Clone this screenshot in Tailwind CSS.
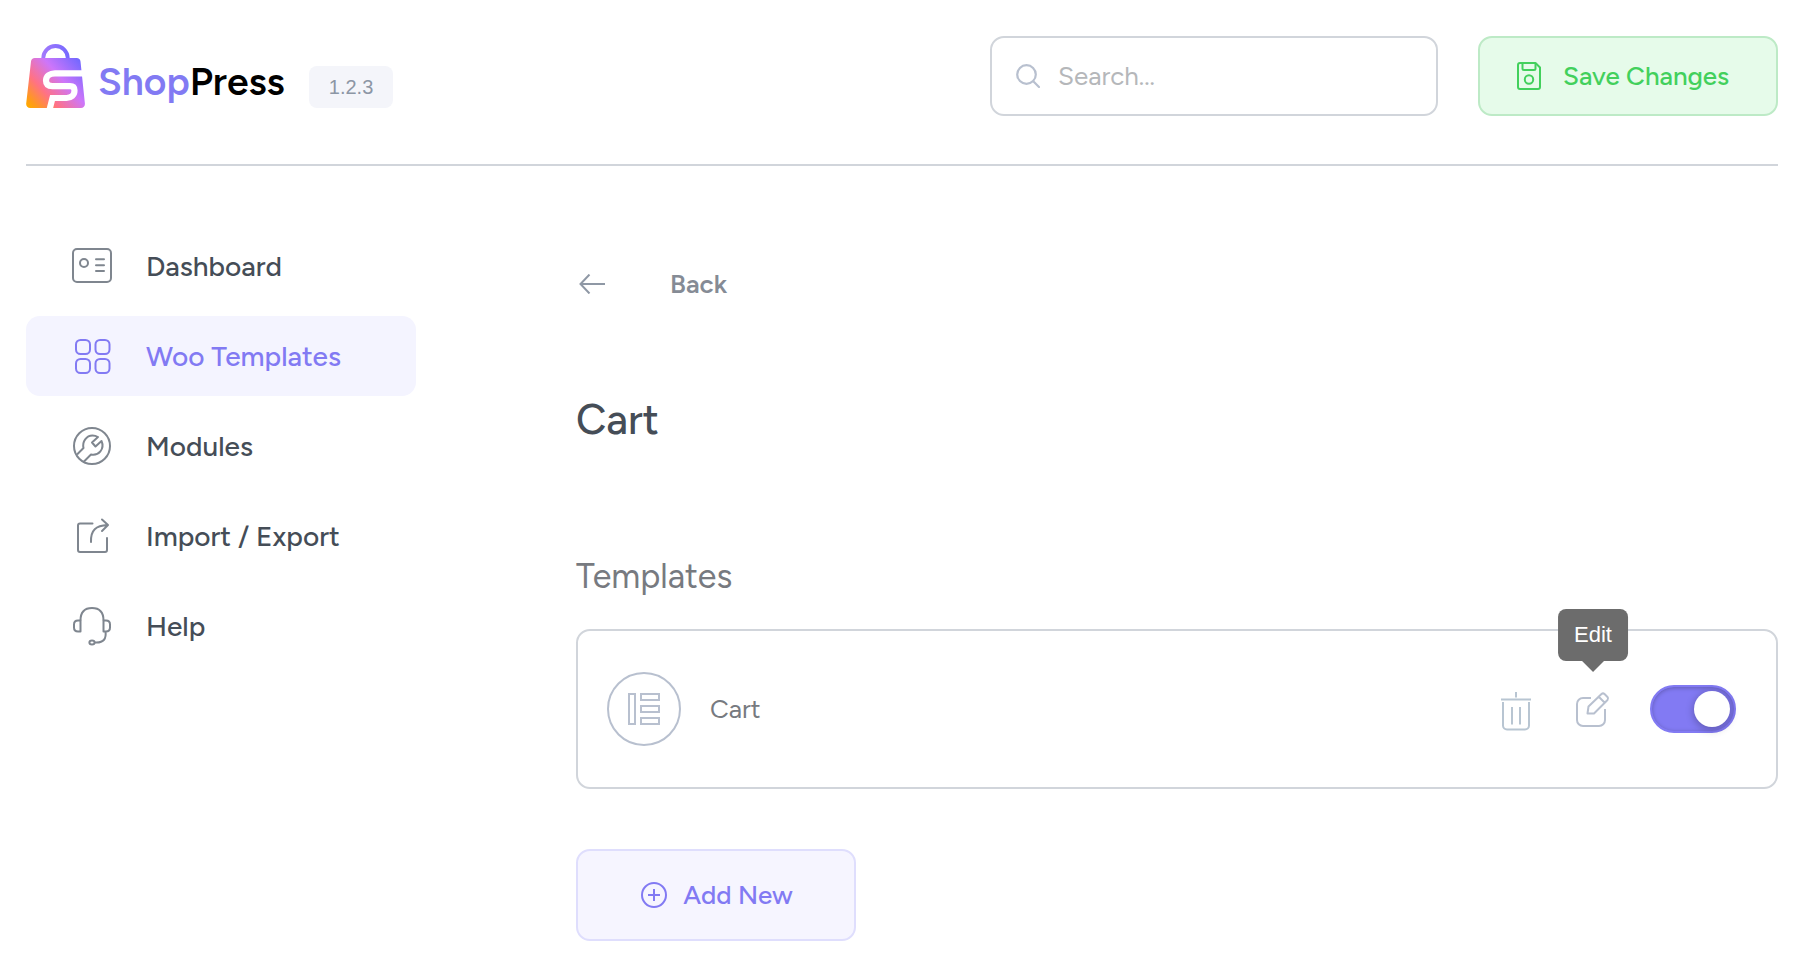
<!DOCTYPE html>
<html lang="en">
<head>
<meta charset="utf-8">
<meta name="viewport" content="width=device-width, initial-scale=1">
<title>ShopPress – Woo Templates</title>
<script src="https://cdn.jsdelivr.net/npm/@tailwindcss/browser@4"></script>
</head>
<body class="min-h-screen bg-white pl-[26px] pr-[42px] font-['Figtree',Lato,sans-serif] text-[#454d57]">

<header class="flex items-start justify-between border-b-2 border-[#d1d5db] pt-9 pb-12">
  <div class="flex items-end pt-2">
    <a href="#" aria-label="ShopPress" class="flex items-end gap-3">
      <svg class="h-16 w-[60px]" viewBox="0 0 60 64" fill="none" aria-hidden="true">
        <defs>
          <linearGradient id="bag" x1="2" y1="62" x2="56" y2="14" gradientUnits="userSpaceOnUse">
            <stop offset="0" stop-color="#ffa800"/>
            <stop offset=".08" stop-color="#ff9a1a"/>
            <stop offset=".3" stop-color="#ff7285"/>
            <stop offset=".6" stop-color="#cd76fa"/>
            <stop offset=".95" stop-color="#7468ff"/>
          </linearGradient>
          <linearGradient id="handle" x1="14" y1="0" x2="44" y2="0" gradientUnits="userSpaceOnUse">
            <stop stop-color="#a67bfb"/><stop offset="1" stop-color="#7468ff"/>
          </linearGradient>
        </defs>
        <path d="M17.200 15V14.300a12.300 12.300 0 0 1 24.600 0v1" stroke="url(#handle)" stroke-width="3.800"/>
        <path d="M9 14h41.500a4 4 0 0 1 4 3.600l4.400 42a4 4 0 0 1-4 4.400H4.200a4 4 0 0 1-4-4.400L5 17.600A4 4 0 0 1 9 14z" fill="url(#bag)"/>
        <path d="M58 29.400H29c-5 0-9 2.600-9 7.200q0 5.600 6.500 5.600h17.500q4.500 0 4.500 4.300c0 4.500-3.500 7.500-8 7.500H26.500L23.200 67" stroke="#fff" stroke-width="6.200"/>
      </svg>
      <span class="text-[39px] leading-[52px] font-semibold text-[#827af3]">Shop<span class="text-black">Press</span></span>
    </a>
    <span class="ml-6 rounded-lg bg-[#f4f5fa] px-5 font-['Liberation_Sans',sans-serif] text-xl leading-[42px] text-[#8c96a5]">1.2.3</span>
  </div>
  <div class="flex gap-10">
    <label class="flex h-20 w-[448px] items-center gap-[18px] rounded-[14px] border-2 border-[#d1d5db] px-6">
      <svg class="size-6 shrink-0" viewBox="0 0 24 24" fill="none" stroke="#b8c0cf" stroke-width="2.200" stroke-linecap="round" aria-hidden="true"><circle cx="10.500" cy="10.500" r="9.300"/><path d="M17.500 17.500 23 23"/></svg>
      <input type="search" aria-label="Search" placeholder="Search..." class="w-full min-w-0 bg-transparent text-[26px] outline-none placeholder:text-[#b5b7ba]">
    </label>
    <button type="button" class="flex h-20 w-[300px] items-center gap-[22px] rounded-[14px] border-2 border-[#bdeac6] bg-[#e6fbea] pl-[37px] text-[26px] font-medium text-[#42d05c]">
      <svg class="h-7 w-6" viewBox="0 0 24 28" fill="none" stroke="currentColor" stroke-width="2" stroke-linejoin="round" aria-hidden="true"><path d="M3 1h15.500L23 5.500V25a2 2 0 0 1-2 2H3a2 2 0 0 1-2-2V3a2 2 0 0 1 2-2z"/><path d="M5.500 1v5.500a1.500 1.500 0 0 0 1.500 1.500h10a1.500 1.500 0 0 0 1.500-1.500V1"/><circle cx="12" cy="17.500" r="4.200"/></svg>
      Save Changes
    </button>
  </div>
</header>

<div class="flex gap-40">
  <nav aria-label="Main" class="flex w-[390px] shrink-0 flex-col gap-[10px] pt-[60px] text-[28px] font-medium">
    <a href="#" class="flex h-20 items-center gap-[34px] rounded-[14px] pl-[46px]">
      <svg class="size-10 shrink-0" viewBox="0 0 40 40" fill="none" stroke="#7f868f" stroke-width="2" stroke-linecap="round" aria-hidden="true"><rect x="1" y="3" width="38" height="33" rx="4"/><circle cx="12" cy="17" r="4"/><path d="M24 13.200h8M24 19.200h8M24 25h8"/></svg>
      Dashboard
    </a>
    <a href="#" aria-current="page" class="flex h-20 items-center gap-[34px] rounded-[14px] bg-[#f4f4ff] pl-[46px] text-[#827af3]">
      <svg class="size-10 shrink-0" viewBox="0 0 40 40" fill="none" stroke="currentColor" stroke-width="2" aria-hidden="true"><rect x="4" y="4" width="14" height="14" rx="4.500"/><rect x="23.500" y="4" width="14" height="14" rx="4.500"/><rect x="4" y="23" width="14" height="14" rx="4.500"/><rect x="23.500" y="23" width="14" height="14" rx="4.500"/></svg>
      Woo Templates
    </a>
    <a href="#" class="flex h-20 items-center gap-[34px] rounded-[14px] pl-[46px]">
      <svg class="size-10 shrink-0" viewBox="0 0 40 40" fill="none" stroke="#7f868f" stroke-width="2" stroke-linejoin="round" aria-hidden="true"><circle cx="20" cy="20" r="18"/><path d="M5 28.500l6.500-6.500c-1.500-6.500 3-12.500 9-12.500q3 0 5.500 1.500l-6 5.500 3.500 4 6-5.500c3.500 8-3 15-10.500 13.500l-7 7"/></svg>
      Modules
    </a>
    <a href="#" class="flex h-20 items-center gap-[34px] rounded-[14px] pl-[46px]">
      <svg class="size-10 shrink-0" viewBox="0 0 40 40" fill="none" stroke="#7f868f" stroke-width="2" stroke-linecap="round" stroke-linejoin="round" aria-hidden="true"><path d="M20.500 7.500H8a2 2 0 0 0-2 2V34a2 2 0 0 0 2 2h25a2 2 0 0 0 2-2V22"/><path d="M19 26C18.500 14 24 9.500 35.500 9M30 3.500l6 5.500-6 6"/></svg>
      Import / Export
    </a>
    <a href="#" class="flex h-20 items-center gap-[34px] rounded-[14px] pl-[46px]">
      <svg class="size-10 shrink-0" viewBox="0 0 40 40" fill="none" stroke="#7f868f" stroke-width="2" stroke-linejoin="round" aria-hidden="true"><path d="M8.500 14.500C8.500 6 13 2 20 2s11.500 4 11.500 12.500"/><path d="M8.500 14.500H6q-4 0-4 4v3q0 4 4 4h2.500zM31.500 14.500h2.500q4 0 4 4v3q0 4-4 4h-2.500zM33.500 25.500q1.500 11-9 11H22.500"/><ellipse cx="20" cy="36.500" rx="2.600" ry="2"/></svg>
      Help
    </a>
  </nav>

  <main class="min-w-0 flex-1 pt-[98px]">
    <a href="#" class="flex items-center gap-16 pl-[3px] text-[26px] leading-10 font-semibold text-[#858b95]">
      <svg class="h-5 w-[27px]" viewBox="0 0 27 20" fill="none" stroke="#8f98a5" stroke-width="2" aria-hidden="true"><path d="M26 10H2M10.500 .500 1.500 10l9 9.500"/></svg>
      Back
    </a>
    <h1 class="mt-[91px] text-[42px] leading-[50px] font-medium">Cart</h1>
    <h2 class="mt-[110px] text-[34px] leading-[44px] font-normal text-[#777a80]">Templates</h2>

    <section class="mt-[30px] flex h-40 items-center rounded-[14px] border-2 border-[#d1d5db] pl-[29px] pr-10">
      <svg class="size-[74px]" viewBox="0 0 74 74" fill="none" stroke="#b8c0cf" stroke-width="2" aria-hidden="true"><circle cx="37" cy="37" r="36"/><path d="M22 22h6v30h-6zM34 22h18v6H34zM34 34h18v6H34zM34 46h18v6H34z"/></svg>
      <span class="ml-[29px] text-[26px] font-normal text-[#777a80]">Cart</span>
      <div class="ml-auto flex items-center">
        <div class="flex gap-11 pt-1">
          <button type="button" aria-label="Delete">
            <svg class="h-10 w-[30px]" viewBox="0 0 30 40" fill="none" stroke="#b8c5d2" stroke-width="2" aria-hidden="true"><path d="M0 8.500h30M15 1v5.500M2 11v23.500a4 4 0 0 0 4 4h18a4 4 0 0 0 4-4V11M11 16v17.500M19 16v17.500"/></svg>
          </button>
          <div class="relative">
            <button type="button" aria-label="Edit" aria-describedby="edit-tip" class="block">
              <svg class="h-10 w-9" viewBox="0 0 36 40" fill="none" stroke="#b8c0cf" stroke-width="2" stroke-linejoin="round" aria-hidden="true"><path d="M16 7H8a6 6 0 0 0-6 6v16a6 6 0 0 0 6 6h16a6 6 0 0 0 6-6V18"/><path d="M12.500 22.500l1-7L26.500 3q1.500-1.300 3 0l3 3q1.300 1.500 0 3L19 22.500zM24 6l6 6"/></svg>
            </button>
            <div id="edit-tip" role="tooltip" class="absolute bottom-full left-1/2 mb-[19px] -translate-x-1/2">
              <div class="rounded-lg bg-[#6c6c6c] px-4 font-['Liberation_Sans',sans-serif] text-[22px] leading-[52px] text-white">Edit</div>
              <svg class="mx-auto h-[11px] w-[22px]" viewBox="0 0 22 11" fill="#6c6c6c" aria-hidden="true"><path d="M0 0h22L11 11z"/></svg>
            </div>
          </div>
        </div>
        <input type="checkbox" role="switch" checked aria-label="Enable Cart template" class="ml-[39px] h-12 w-[86px] appearance-none rounded-full border-2 border-[#827af3] bg-[#827af3] p-1 shadow-[inset_0_1px_4px_rgba(0,0,0,0.25)] before:ml-auto before:block before:size-9 before:rounded-full before:bg-white before:shadow-[0_2px_8px_rgba(0,0,0,0.3)]">
      </div>
    </section>

    <button type="button" class="mt-[60px] flex h-[92px] w-[280px] items-center justify-center gap-4 rounded-[14px] border-2 border-[#dfdefd] bg-[#f6f5ff] pl-[2px] text-[26px] font-medium text-[#827af3]">
      <svg class="size-[26px]" viewBox="0 0 26 26" fill="none" stroke="currentColor" stroke-width="2" aria-hidden="true"><circle cx="13" cy="13" r="12"/><path d="M13 7v12M7 13h12"/></svg>
      Add New
    </button>
  </main>
</div>
</body>
</html>
